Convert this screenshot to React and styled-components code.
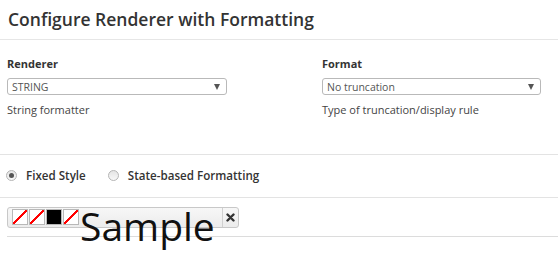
import React from "react";
import styled, { createGlobalStyle } from "styled-components";

const GlobalStyle = createGlobalStyle`
  html, body {
    margin: 0;
    padding: 0;
    background: #ffffff;
    font-family: "Open Sans", "Noto Sans", sans-serif;
    color: #333;
  }
`;

const Page = styled.div`
  width: 558px;
  min-height: 276px;
`;

const Header = styled.div`
  padding: 0 8px;
  display: flex;
  align-items: center;
  border-bottom: 1px solid #e6e6e6;
  box-sizing: border-box;
  height: 40px;
`;

const Title = styled.h1`
  margin: 0;
  font-size: 17.5px;
  font-weight: 600;
  color: #333;
  position: relative;
  top: -1px;
`;

const FieldRow = styled.div`
  display: grid;
  grid-template-columns: 315px 1fr;
  padding: 16px 0 0 7px;
  height: 115px;
  box-sizing: border-box;
  border-bottom: 1px solid #e3e3e3;
`;

const Field = styled.div`
  display: flex;
  flex-direction: column;
`;

const Label = styled.div`
  font-size: 11px;
  font-weight: 700;
  color: #333;
  line-height: 16px;
  margin-bottom: 6px;
`;

const Select = styled.div`
  width: ${(p) => p.$width}px;
  height: 17px;
  box-sizing: border-box;
  border: 1px solid #b9b9b9;
  border-radius: 3px;
  padding: 0 6px 0 4px;
  display: flex;
  align-items: center;
  justify-content: space-between;
  font-size: 10.5px;
  color: #555;
`;

const Arrow = styled.span`
  width: 0;
  height: 0;
  border-left: 3px solid transparent;
  border-right: 3px solid transparent;
  border-top: 6px solid #555;
`;

const Help = styled.div`
  font-size: 11px;
  color: #444;
  margin-top: 7px;
  line-height: 16px;
`;

const RadioRow = styled.div`
  height: 43px;
  box-sizing: border-box;
  display: flex;
  align-items: center;
  gap: 22px;
  padding: 0 6px 1px;
  border-bottom: 1px solid #e3e3e3;
`;

const RadioOption = styled.label`
  display: flex;
  align-items: center;
  gap: 9px;
  font-size: 11.6px;
  font-weight: 600;
  color: #333;
`;

const RadioDot = styled.span`
  width: 11px;
  height: 11px;
  box-sizing: border-box;
  border-radius: 50%;
  border: 1px solid #b5b5b5;
  background: linear-gradient(#e4e4e4, #f8f8f8);
  display: flex;
  align-items: center;
  justify-content: center;
  &::after {
    content: "";
    width: 5px;
    height: 5px;
    border-radius: 50%;
    background: ${(p) => (p.$checked ? "#555" : "transparent")};
  }
`;

const ToolRow = styled.div`
  margin-left: 7px;
  height: 39px;
  box-sizing: border-box;
  padding-top: 9px;
  border-bottom: 1px solid #dcdcdc;
`;

const Toolbar = styled.div`
  display: inline-flex;
  align-items: flex-start;
  height: 21px;
  box-sizing: border-box;
  border: 1px solid #c8c8c8;
  border-radius: 3px;
  background: linear-gradient(#f7f7f7, #ececec);
  padding-left: 4px;
`;

const Swatches = styled.div`
  display: flex;
  gap: 1px;
  margin-top: 1px;
`;

const Swatch = styled.span`
  width: 16px;
  height: 16px;
  box-sizing: border-box;
  border: 1px solid #b8b8b8;
  background: ${(p) =>
    p.$color
      ? p.$color
      : "linear-gradient(to bottom right, #fff calc(50% - 1.2px), #f00 calc(50% - 1px), #f00 calc(50% + 1px), #fff calc(50% + 1.2px))"};
`;

const Sample = styled.span`
  font-size: 39px;
  line-height: 40px;
  margin: -2px 7px 0 1px;
  color: #111;
  font-weight: 400;
  position: relative;
`;

const CloseButton = styled.span`
  align-self: stretch;
  width: 15px;
  border-left: 1px solid #d0d0d0;
  display: flex;
  align-items: center;
  justify-content: center;
`;

export default function App() {
  return (
    <Page>
      <GlobalStyle />
      <Header>
        <Title>Configure Renderer with Formatting</Title>
      </Header>
      <FieldRow>
        <Field>
          <Label>Renderer</Label>
          <Select $width={220}>
            <span>STRING</span>
            <Arrow />
          </Select>
          <Help>String formatter</Help>
        </Field>
        <Field>
          <Label>Format</Label>
          <Select $width={219}>
            <span>No truncation</span>
            <Arrow />
          </Select>
          <Help>Type of truncation/display rule</Help>
        </Field>
      </FieldRow>
      <RadioRow>
        <RadioOption>
          <RadioDot $checked />
          Fixed Style
        </RadioOption>
        <RadioOption>
          <RadioDot />
          State-based Formatting
        </RadioOption>
      </RadioRow>
      <ToolRow>
        <Toolbar>
          <Swatches>
            <Swatch />
            <Swatch />
            <Swatch $color="#000" />
            <Swatch />
          </Swatches>
          <Sample>Sample</Sample>
          <CloseButton>
            <svg width="9" height="9" viewBox="0 0 9 9">
              <path d="M1.5 1.5 L7.5 7.5 M7.5 1.5 L1.5 7.5" stroke="#333" strokeWidth="2.4" strokeLinecap="round" />
            </svg>
          </CloseButton>
        </Toolbar>
      </ToolRow>
    </Page>
  );
}
